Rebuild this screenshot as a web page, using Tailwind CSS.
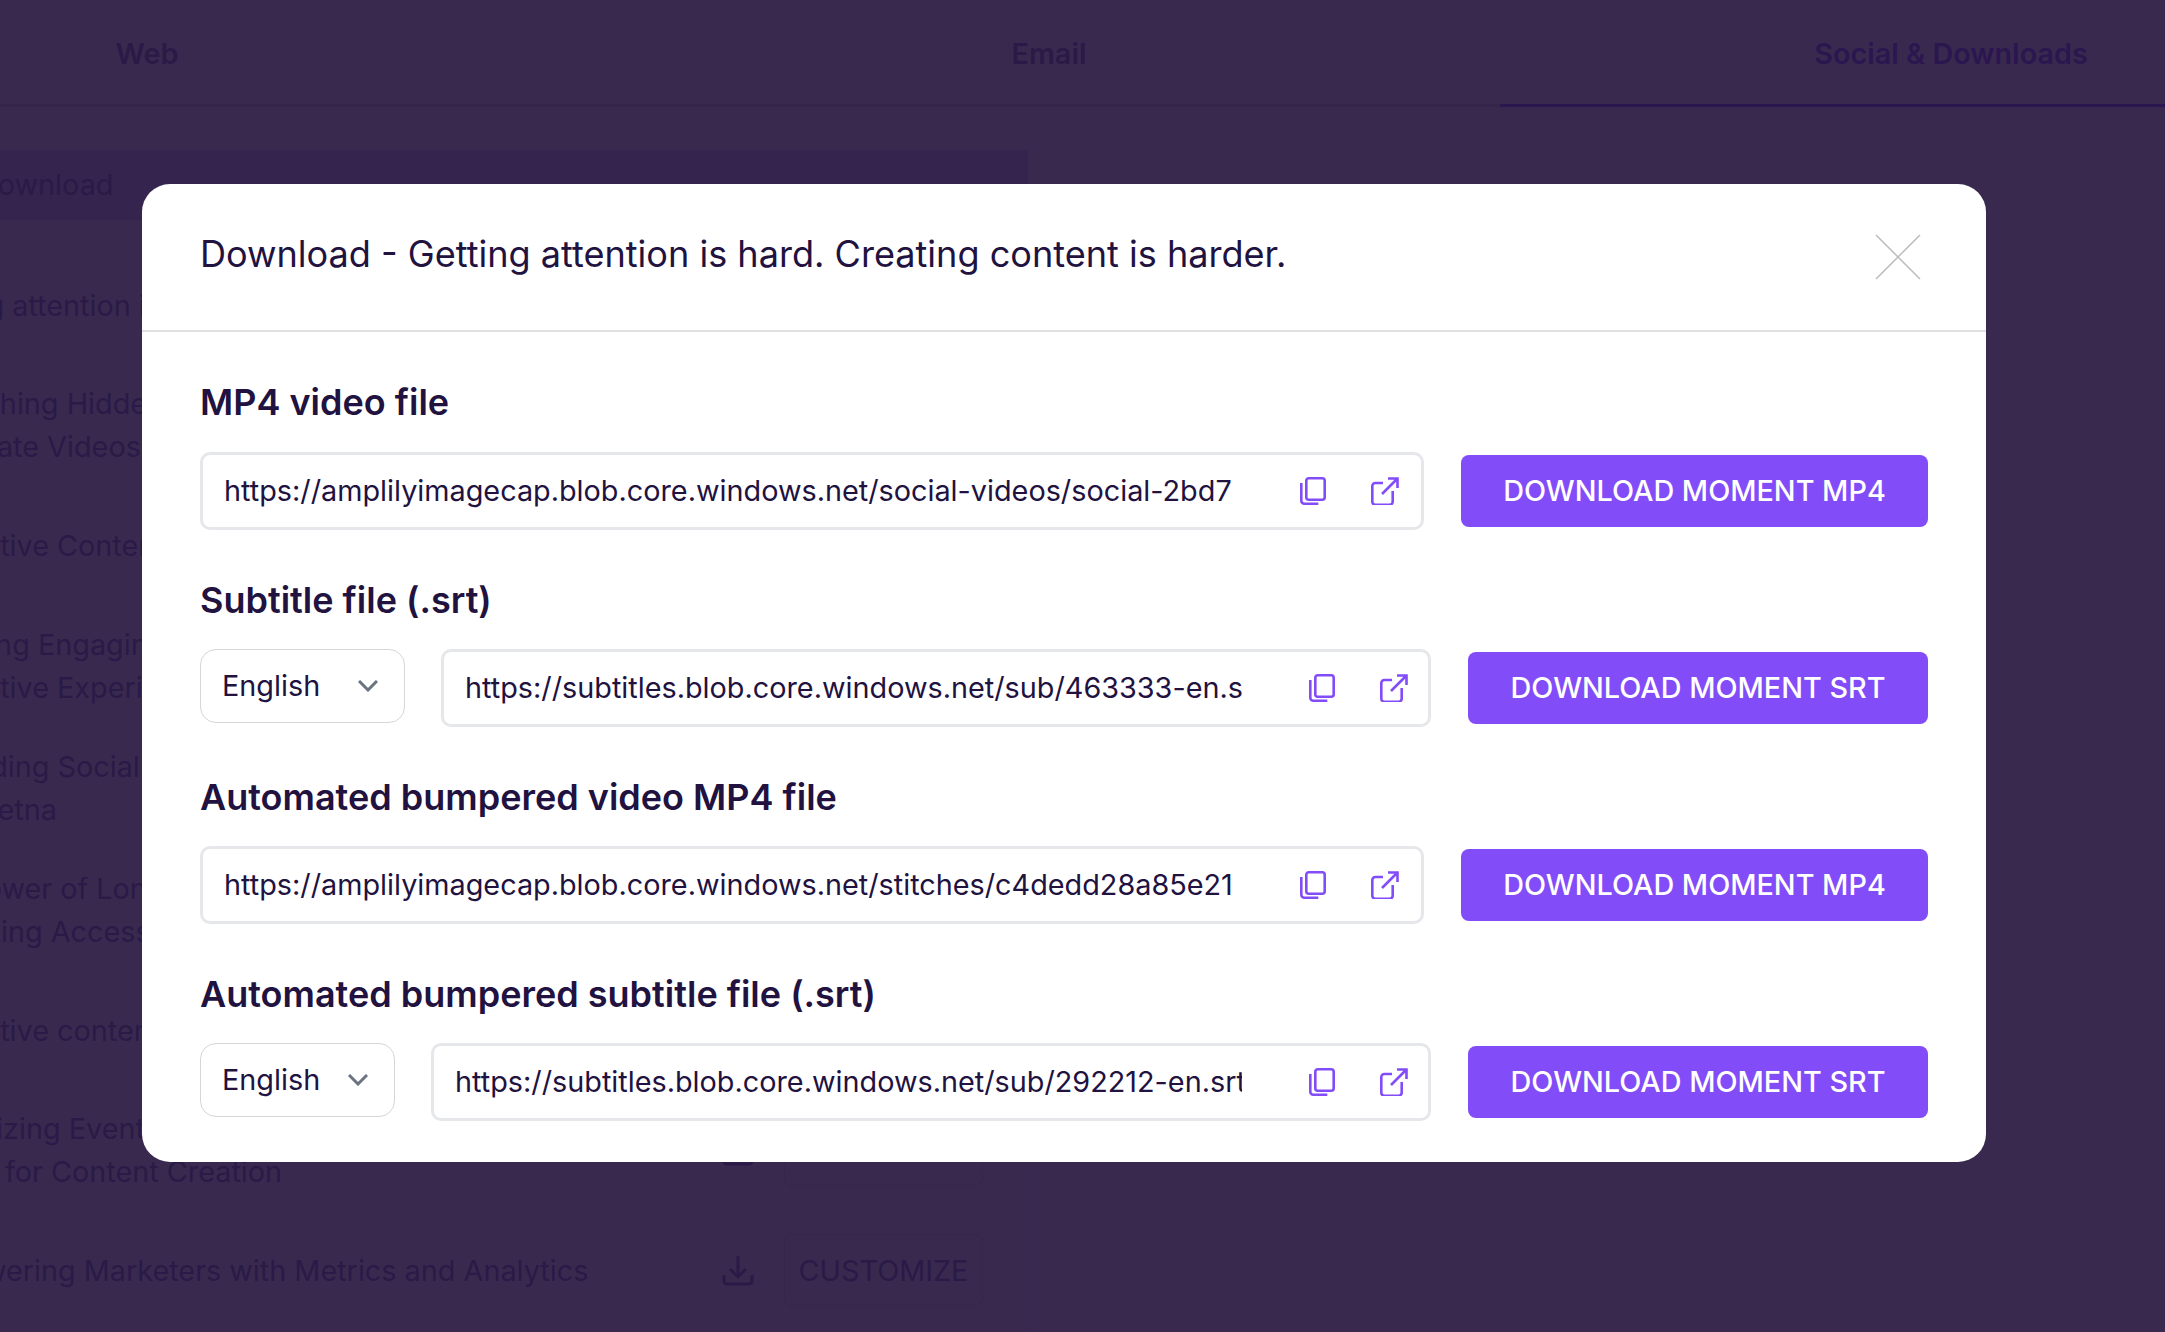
<!DOCTYPE html>
<html lang="en">
<head>
<meta charset="utf-8">
<title>Download</title>
<script src="https://cdn.jsdelivr.net/npm/@tailwindcss/browser@4"></script>
</head>
<body class="m-0">
<div class="relative h-[1332px] w-[2165px] overflow-hidden bg-[#39294f] font-['Inter','Liberation_Sans',sans-serif] text-[#2a1a47]">
  <!-- page behind the overlay -->
  <div class="ml-[-304px] w-[2706px]">
    <div class="grid h-[107px] grid-cols-3 text-[28.8px] font-semibold">
      <div class="flex items-center justify-center border-b-[3px] border-[#35254b] pt-[3px]">Web</div>
      <div class="flex items-center justify-center border-b-[3px] border-[#35254b] pt-[3px]">Email</div>
      <div class="flex items-center justify-center border-b-[3px] border-[#2b1650] pt-[3px] text-[#2b1650]">Social &amp; Downloads</div>
    </div>
  </div>
  <div class="mt-[43px] h-[1182px] w-[1029px] border-r border-[#382750]">
    <div class="ml-[-23px] flex h-[70px] items-center bg-[#35244e] text-[28.8px]">
      <span>Download</span>
    </div>
    <div class="ml-[-94px] w-[1122px] pt-[25px] text-[28.8px] leading-[43px]">
      <div class="flex h-[120px] items-center justify-between pr-[45px]"><div>Getting attention is hard</div><div class="flex items-center gap-[30px]"><svg class="h-[32px] w-[32px]" viewBox="0 0 32 32" fill="none" stroke="#2a1a47" stroke-width="3"><path d="M16 2v20M8 15l8 8 8-8M2 21v6a3 3 0 0 0 3 3h22a3 3 0 0 0 3-3v-6"/></svg><div class="flex h-[72px] w-[199px] items-center justify-center rounded-lg border border-[#36264c]">CUSTOMIZE</div></div></div>
      <div class="flex h-[120px] items-center justify-between"><div>Unleashing Hidden<br><span class="ml-[8px]">Generate Videos</span></div></div>
      <div class="flex h-[120px] items-center justify-between"><div>Interactive Content</div></div>
      <div class="flex h-[122px] items-center justify-between"><div>Elevating Engaging<br>Interactive Experiences</div></div>
      <div class="flex h-[122px] items-center justify-between"><div>Expanding Social<br>from Aetna</div></div>
      <div class="flex h-[122px] items-center justify-between"><div>The Power of Long<br>Unlocking Accessible</div></div>
      <div class="flex h-[118px] items-center justify-between"><div>Interactive content</div></div>
      <div class="flex h-[121px] items-center justify-between pr-[45px]"><div>Maximizing Events<br><span class="ml-[99px]">for Content Creation</span></div><div class="flex items-center gap-[30px]"><svg class="h-[32px] w-[32px]" viewBox="0 0 32 32" fill="none" stroke="#2a1a47" stroke-width="3"><path d="M16 2v20M8 15l8 8 8-8M2 21v6a3 3 0 0 0 3 3h22a3 3 0 0 0 3-3v-6"/></svg><div class="flex h-[72px] w-[199px] items-center justify-center rounded-lg border border-[#36264c]">CUSTOMIZE</div></div></div>
      <div class="flex h-[120px] items-center justify-between pr-[45px]"><div>Empowering Marketers with Metrics and Analytics</div><div class="flex items-center gap-[30px]"><svg class="h-[32px] w-[32px]" viewBox="0 0 32 32" fill="none" stroke="#2a1a47" stroke-width="3"><path d="M16 2v20M8 15l8 8 8-8M2 21v6a3 3 0 0 0 3 3h22a3 3 0 0 0 3-3v-6"/></svg><div class="flex h-[72px] w-[199px] items-center justify-center rounded-lg border border-[#36264c]">CUSTOMIZE</div></div></div>
    </div>
  </div>

  <!-- modal -->
  <div class="absolute left-[142px] top-[184px] h-[978px] w-[1844px] rounded-[28px] bg-white text-[#21123f]">
    <div class="flex h-[148px] items-center justify-between border-b-2 border-[#e0e0e3] pl-[58px] pr-[65px]">
      <div class="pb-[4px] text-[36.1px] leading-[1.2]">Download - Getting attention is hard. Creating content is harder.</div>
      <svg class="h-[46px] w-[46px]" viewBox="0 0 46 46" fill="none" stroke="#bdbdbd" stroke-width="1.5"><path d="M1 1l44 44M45 1L1 45"/></svg>
    </div>
    <div class="px-[58px] pt-[48px]">

      <div class="h-[197px]">
        <h2 class="h-[72px] text-[36px] font-semibold leading-[44px]">MP4 video file</h2>
        <div class="flex items-center gap-[37px]">
          <div class="flex h-[78px] min-w-0 flex-1 items-center rounded-[10px] border-[3px] border-[#e5e7eb] pl-[21px] pr-[22px]">
            <div class="min-w-0 flex-1 overflow-hidden whitespace-nowrap text-[28.8px]">https://amplilyimagecap.blob.core.windows.net/social-videos/social-2bd7</div>
            <div class="ml-[65px] flex shrink-0 items-center gap-[45px]">
              <svg class="h-[28px] w-[26px]" viewBox="0 0 26 28" fill="none" stroke="#834cf9" stroke-width="2.6"><rect x="6.3" y="1.3" width="18.4" height="21.4" rx="2.5"/><path d="M1.3 6v17.7a3 3 0 0 0 3 3h14"/></svg>
              <svg class="h-[28px] w-[28px]" viewBox="0 0 28 28" fill="none" stroke="#834cf9" stroke-width="2.6"><path d="M12 6H4.3a3 3 0 0 0-3 3v15.7a3 3 0 0 0 3 3h14.4a3 3 0 0 0 3-3V14M11 17L26.5 1.5M17 1.5h9.5V11"/></svg>
            </div>
          </div>
          <button class="flex h-[72px] w-[467px] shrink-0 items-center justify-center rounded-lg bg-[#834cf9] text-[28.8px] font-medium text-white">DOWNLOAD MOMENT MP4</button>
        </div>
      </div>

      <div class="h-[197px]">
        <h2 class="h-[72px] pt-[1px] text-[36px] font-semibold leading-[44px]">Subtitle file (.srt)</h2>
        <div class="flex items-center gap-[36px]">
          <div class="flex h-[74px] w-[205px] shrink-0 items-center justify-between self-start rounded-2xl border border-[#d6d6da] pl-[21px] pr-[26px] text-[28.8px]">English<svg class="h-[12px] w-[20px]" viewBox="0 0 20 12" fill="none" stroke="#6b7280" stroke-width="3"><path d="M1 1l9 9 9-9"/></svg></div>
          <div class="flex h-[78px] min-w-0 flex-1 items-center rounded-[10px] border-[3px] border-[#e5e7eb] pl-[21px] pr-[20px]">
            <div class="min-w-0 flex-1 overflow-hidden whitespace-nowrap text-[28.8px]">https://subtitles.blob.core.windows.net/sub/463333-en.srt</div>
            <div class="ml-[65px] flex shrink-0 items-center gap-[45px]">
              <svg class="h-[28px] w-[26px]" viewBox="0 0 26 28" fill="none" stroke="#834cf9" stroke-width="2.6"><rect x="6.3" y="1.3" width="18.4" height="21.4" rx="2.5"/><path d="M1.3 6v17.7a3 3 0 0 0 3 3h14"/></svg>
              <svg class="h-[28px] w-[28px]" viewBox="0 0 28 28" fill="none" stroke="#834cf9" stroke-width="2.6"><path d="M12 6H4.3a3 3 0 0 0-3 3v15.7a3 3 0 0 0 3 3h14.4a3 3 0 0 0 3-3V14M11 17L26.5 1.5M17 1.5h9.5V11"/></svg>
            </div>
          </div>
          <button class="ml-[1px] flex h-[72px] w-[460px] shrink-0 items-center justify-center rounded-lg bg-[#834cf9] text-[28.8px] font-medium text-white">DOWNLOAD MOMENT SRT</button>
        </div>
      </div>

      <div class="h-[197px]">
        <h2 class="h-[72px] pt-[1px] text-[36px] font-semibold leading-[44px]">Automated bumpered video MP4 file</h2>
        <div class="flex items-center gap-[37px]">
          <div class="flex h-[78px] min-w-0 flex-1 items-center rounded-[10px] border-[3px] border-[#e5e7eb] pl-[21px] pr-[22px]">
            <div class="min-w-0 flex-1 overflow-hidden whitespace-nowrap text-[28.8px]">https://amplilyimagecap.blob.core.windows.net/stitches/c4dedd28a85e21</div>
            <div class="ml-[65px] flex shrink-0 items-center gap-[45px]">
              <svg class="h-[28px] w-[26px]" viewBox="0 0 26 28" fill="none" stroke="#834cf9" stroke-width="2.6"><rect x="6.3" y="1.3" width="18.4" height="21.4" rx="2.5"/><path d="M1.3 6v17.7a3 3 0 0 0 3 3h14"/></svg>
              <svg class="h-[28px] w-[28px]" viewBox="0 0 28 28" fill="none" stroke="#834cf9" stroke-width="2.6"><path d="M12 6H4.3a3 3 0 0 0-3 3v15.7a3 3 0 0 0 3 3h14.4a3 3 0 0 0 3-3V14M11 17L26.5 1.5M17 1.5h9.5V11"/></svg>
            </div>
          </div>
          <button class="flex h-[72px] w-[467px] shrink-0 items-center justify-center rounded-lg bg-[#834cf9] text-[28.8px] font-medium text-white">DOWNLOAD MOMENT MP4</button>
        </div>
      </div>

      <div>
        <h2 class="h-[72px] pt-[1px] text-[36px] font-semibold leading-[44px]">Automated bumpered subtitle file (.srt)</h2>
        <div class="flex items-center gap-[36px]">
          <div class="flex h-[74px] w-[195px] shrink-0 items-center justify-between self-start rounded-2xl border border-[#d6d6da] pl-[21px] pr-[26px] text-[28.8px]">English<svg class="h-[12px] w-[20px]" viewBox="0 0 20 12" fill="none" stroke="#6b7280" stroke-width="3"><path d="M1 1l9 9 9-9"/></svg></div>
          <div class="flex h-[78px] min-w-0 flex-1 items-center rounded-[10px] border-[3px] border-[#e5e7eb] pl-[21px] pr-[20px]">
            <div class="min-w-0 flex-1 overflow-hidden whitespace-nowrap text-[28.8px]">https://subtitles.blob.core.windows.net/sub/292212-en.srt</div>
            <div class="ml-[67px] flex shrink-0 items-center gap-[45px]">
              <svg class="h-[28px] w-[26px]" viewBox="0 0 26 28" fill="none" stroke="#834cf9" stroke-width="2.6"><rect x="6.3" y="1.3" width="18.4" height="21.4" rx="2.5"/><path d="M1.3 6v17.7a3 3 0 0 0 3 3h14"/></svg>
              <svg class="h-[28px] w-[28px]" viewBox="0 0 28 28" fill="none" stroke="#834cf9" stroke-width="2.6"><path d="M12 6H4.3a3 3 0 0 0-3 3v15.7a3 3 0 0 0 3 3h14.4a3 3 0 0 0 3-3V14M11 17L26.5 1.5M17 1.5h9.5V11"/></svg>
            </div>
          </div>
          <button class="ml-[1px] flex h-[72px] w-[460px] shrink-0 items-center justify-center rounded-lg bg-[#834cf9] text-[28.8px] font-medium text-white">DOWNLOAD MOMENT SRT</button>
        </div>
      </div>

    </div>
  </div>
</div>
</body>
</html>
